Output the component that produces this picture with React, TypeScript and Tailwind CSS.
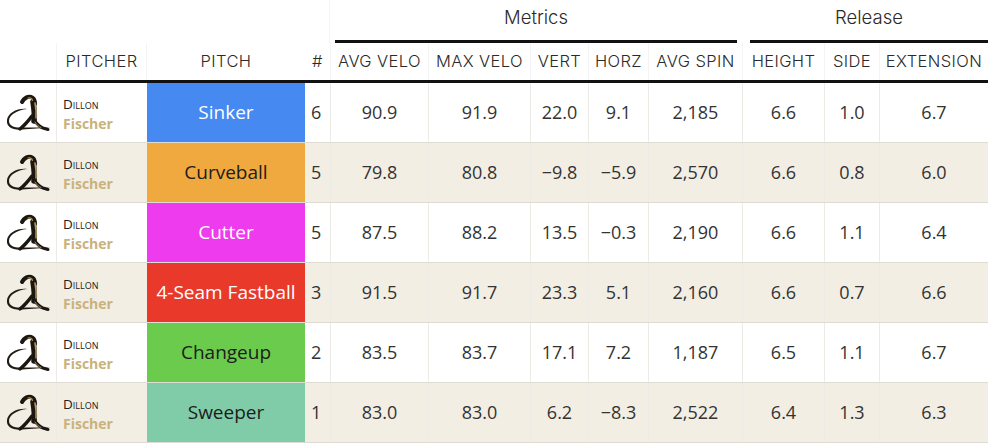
import React from 'react';

const cols = 'grid grid-cols-[57px_90px_158px_25px_98px_102px_58px_60px_94px_82px_55px_109px]';

const rows = [
  { pitch: 'Sinker', bg: 'bg-[#4689f0]', fg: 'text-white', n: 6, vals: ['90.9', '91.9', '22.0', '9.1', '2,185', '6.6', '1.0', '6.7'] },
  { pitch: 'Curveball', bg: 'bg-[#f0a93e]', fg: 'text-[#1c1c1c]', n: 5, vals: ['79.8', '80.8', '\u22129.8', '\u22125.9', '2,570', '6.6', '0.8', '6.0'] },
  { pitch: 'Cutter', bg: 'bg-[#ee3bee]', fg: 'text-white', n: 5, vals: ['87.5', '88.2', '13.5', '\u22120.3', '2,190', '6.6', '1.1', '6.4'] },
  { pitch: '4-Seam Fastball', bg: 'bg-[#e8392b]', fg: 'text-white', n: 3, vals: ['91.5', '91.7', '23.3', '5.1', '2,160', '6.6', '0.7', '6.6'] },
  { pitch: 'Changeup', bg: 'bg-[#6bcb4d]', fg: 'text-[#1c1c1c]', n: 2, vals: ['83.5', '83.7', '17.1', '7.2', '1,187', '6.5', '1.1', '6.7'] },
  { pitch: 'Sweeper', bg: 'bg-[#80cca8]', fg: 'text-[#1c1c1c]', n: 1, vals: ['83.0', '83.0', '6.2', '\u22128.3', '2,522', '6.4', '1.3', '6.3'] },
];

const heads = ['AVG VELO', 'MAX VELO', 'VERT', 'HORZ', 'AVG SPIN', 'HEIGHT', 'SIDE', 'EXTENSION'];

// club mark: crescent swoosh around a crouching figure
function Logo() {
  return (
    <svg width="48" height="42" viewBox="0 0 48 42">
      {/* swoosh */}
      <path d="M23 17 C13 18 5 23 5 29 C5 34 11 36 18 35.5 L47 35.5 L18 37.5 C9 38.5 2 35 3 28 C4 21 13 16 23 17 Z" fill="#211c15" />
      {/* back / head hook */}
      <path d="M18 10 C20 6 24 4 27 5 C30 6 31 9 31 12" stroke="#1c1711" strokeWidth="4" fill="none" strokeLinecap="round" />
      {/* torso */}
      <path d="M29 10 C30 16 31 22 30 29" stroke="#1c1711" strokeWidth="5.5" fill="none" strokeLinecap="round" />
      {/* left leg */}
      <path d="M28 24 C25 28 21 33 16 37" stroke="#1c1711" strokeWidth="3.5" fill="none" strokeLinecap="round" />
      {/* right leg */}
      <path d="M30 28 C33 32 36 35 39 36 L44 37.5" stroke="#1c1711" strokeWidth="3" fill="none" strokeLinecap="round" />
      {/* gold highlights */}
      <path d="M31 11 C32 16 32.5 21 32 26" stroke="#b89b62" strokeWidth="1.5" fill="none" strokeLinecap="round" />
      <path d="M24 6 C26 5.5 28 6.5 28.5 8.5" stroke="#a88c55" strokeWidth="1.2" fill="none" strokeLinecap="round" />
      <path d="M31 30 C33 33 35 35 37 35.5" stroke="#a88c55" strokeWidth="1" fill="none" strokeLinecap="round" />
    </svg>
  );
}

export default function App() {
  const num = "font-['Open_Sans',sans-serif] text-[18px] text-[#333]";
  const head = "font-['Inter',sans-serif] font-light text-[16.5px] text-[#2a2a2a] tracking-[0.4px]";
  const group = "flex-1 flex items-center justify-center pb-[5px] font-['Inter',sans-serif] font-light text-[18.5px] text-[#2a2a2a]";
  return (
    <div className="w-[988px] h-[444px] bg-white overflow-hidden">
      <div className={`${cols} h-[43px]`}>
        <div className="col-span-4 border-r border-[#f4f4f4]" />
        <div className="col-span-5 px-[5px] flex flex-col">
          <div className={group}>Metrics</div>
          <div className="h-[3px] bg-[#111]" />
        </div>
        <div className="col-span-3 pl-[8px] flex flex-col">
          <div className={group}>Release</div>
          <div className="h-[3px] bg-[#111]" />
        </div>
      </div>
      <div className={`${cols} h-[40px] border-b-[3px] border-[#111]`}>
        <div className="border-r border-[#f4f4f4]" />
        <div className={`${head} border-r border-[#f4f4f4] flex items-center justify-center`}>PITCHER</div>
        <div className={`${head} flex items-center justify-center`}>PITCH</div>
        <div className={`${head} flex items-center justify-center`}>#</div>
        {heads.map((h) => (
          <div key={h} className={`${head} flex items-center justify-center border-l border-[#f4f4f4] whitespace-nowrap`}>{h}</div>
        ))}
      </div>
      {rows.map((r, i) => (
        <div key={r.pitch} className={`${cols} h-[60px] border-b border-[#dedbd3] ${i % 2 ? 'bg-[#f2eee4]' : 'bg-white'}`}>
          <div className="flex items-center justify-center border-r border-[#ecebe6]">
            <Logo />
          </div>
          <div className="flex flex-col justify-center pl-[6px] pt-[2px] leading-[19px]">
            <span className="font-['Open_Sans',sans-serif] text-[13.5px] text-[#222] [font-variant:small-caps]">Dillon</span>
            <span className="font-['Open_Sans',sans-serif] font-bold text-[14px] text-[#c9b27c]">Fischer</span>
          </div>
          <div className={`${r.bg} ${r.fg} flex items-center justify-center font-['Open_Sans',sans-serif] text-[19px]`}>{r.pitch}</div>
          <div className={`${num} flex items-center pl-[6px]`}>{r.n}</div>
          {r.vals.map((v, j) => (
            <div key={j} className={`${num} flex items-center justify-center border-l border-[#ecebe6]`}>{v}</div>
          ))}
        </div>
      ))}
    </div>
  );
}
